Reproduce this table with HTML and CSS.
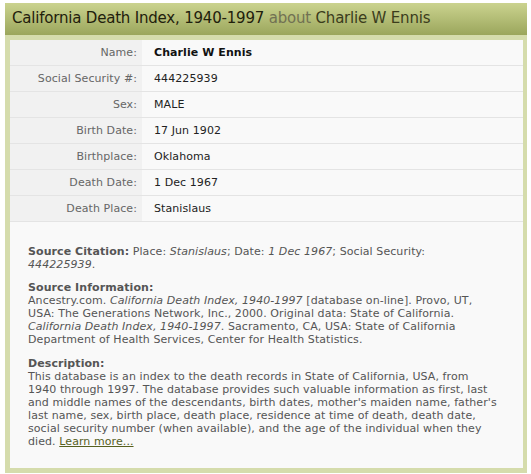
FILE: index.html
```html
<!DOCTYPE html>
<html>
<head>
<meta charset="utf-8">
<link rel="stylesheet" href="styles.css">
</head>
<body>
<div class="record">
  <div class="head">California Death Index, 1940-1997 <span class="about">about</span> <span class="who">Charlie W Ennis</span></div>
  <div class="panel">
    <div class="facts">
      <div class="row"><div class="lbl">Name:</div><div class="val"><b>Charlie W Ennis</b></div></div>
      <div class="row"><div class="lbl">Social Security #:</div><div class="val">444225939</div></div>
      <div class="row"><div class="lbl">Sex:</div><div class="val">MALE</div></div>
      <div class="row"><div class="lbl">Birth Date:</div><div class="val">17 Jun 1902</div></div>
      <div class="row"><div class="lbl">Birthplace:</div><div class="val">Oklahoma</div></div>
      <div class="row"><div class="lbl">Death Date:</div><div class="val">1 Dec 1967</div></div>
      <div class="row"><div class="lbl">Death Place:</div><div class="val">Stanislaus</div></div>
    </div>
    <div class="source">
      <p class="cite"><b>Source Citation:</b> Place: <i>Stanislaus</i>; Date: <i>1 Dec 1967</i>; Social Security: <i>444225939</i>.</p>
      <p><b>Source Information:</b><br>Ancestry.com. <i>California Death Index, 1940-1997</i> [database on-line]. Provo, UT, USA: The Generations Network, Inc., 2000. Original data: State of California. <i>California Death Index, 1940-1997</i>. Sacramento, CA, USA: State of California Department of Health Services, Center for Health Statistics.</p>
      <p><b>Description:</b><br>This database is an index to the death records in State of California, USA, from 1940 through 1997. The database provides such valuable information as first, last and middle names of the descendants, birth dates, mother's maiden name, father's last name, sex, birth place, death place, residence at time of death, death date, social security number (when available), and the age of the individual when they died. <a href="#" class="more">Learn more...</a></p>
    </div>
  </div>
</div>
</body>
</html>
```
FILE: styles.css
```css
html, body { margin: 0; padding: 0; background: #fff; }
body { padding: 3px 4px 0 5px; font-family: "DejaVu Sans", Verdana, sans-serif; }
.record { width: 522px; background: #d5dcac; }
.head {
  height: 32px;
  box-sizing: border-box;
  padding: 6px 0 0 7px;
  font-size: 15px;
  color: #1f200c;
  background: linear-gradient(#cbd38f, #9ba65c);
  white-space: nowrap;
  letter-spacing: -0.2px;
}
.head .about { color: #717153; }
.head .who { color: #3b3c1c; }
.panel { margin: 0 4px 0 5px; padding-top: 5px; padding-bottom: 5px; }
.facts { background: #f9f9f9; }
.row { display: grid; grid-template-columns: 132px 1fr; border-bottom: 1px solid #e4e4e4; height: 25px; font-size: 11px; letter-spacing: 0.08px; }
.lbl { background: #f1f1f1; text-align: right; color: #666; padding-right: 5px; line-height: 25px; }
.val { padding-left: 12px; color: #222; line-height: 25px; }
.val b { color: #111; }
.source { background: #f9f9f9; padding: 23px 25px 20px 18px; font-size: 11px; line-height: 13px; color: #555; letter-spacing: 0.08px; }
.source p { margin: 0 0 10px; }
.source p.cite { max-width: 460px; }
.source p:nth-child(2) { margin-bottom: 11px; }
.source p:last-child { margin-bottom: 0; }
.source b { color: #555; }
.more { color: #56601e; }
```
